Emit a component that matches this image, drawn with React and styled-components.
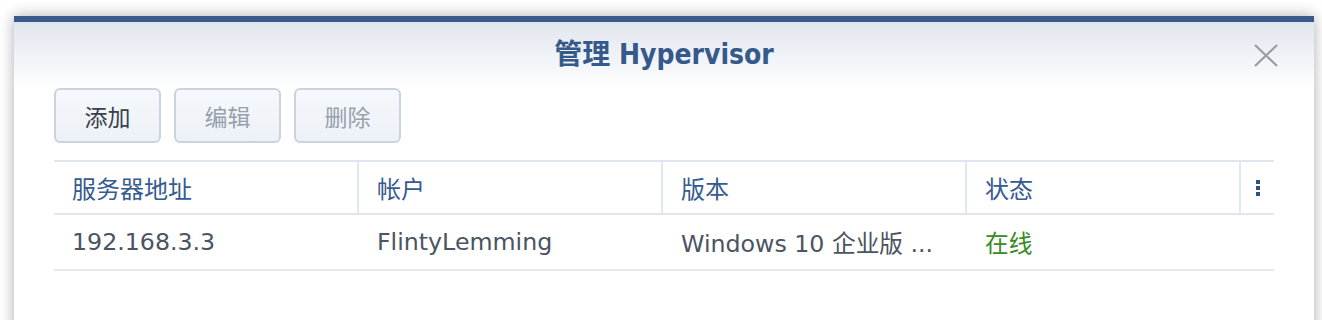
import React from 'react';
import styled, { createGlobalStyle } from 'styled-components';

const GlobalStyle = createGlobalStyle`
    html, body {
        margin: 0;
        padding: 0;
        background: #ffffff;
        overflow: hidden;
    }
`;

const Page = styled.div`
    padding: 16px 8px 0 14px;
    height: 320px;
    box-sizing: border-box;
`;

const Window = styled.div`
    height: 340px;
    border-top: 6px solid #395a8b;
    background: linear-gradient(#e1e6ee 0, #f6f8fb 50px, #ffffff 66px);
    box-shadow: 0 0 14px rgba(0, 0, 0, 0.32);
    padding: 0 40px;
`;

const TitleBar = styled.div`
    display: grid;
    grid-template-columns: 1fr auto 1fr;
    align-items: center;
    height: 66px;
`;

const Title = styled.h1`
    grid-column: 2;
    margin: 0;
    font-family: "DejaVu Sans Condensed", "DejaVu Sans", "Noto Sans CJK SC", sans-serif;
    font-weight: bold;
    font-size: 28px;
    line-height: 34px;
    color: #36598b;
`;

const CloseButton = styled.button`
    grid-column: 3;
    justify-self: end;
    margin-right: -6px;
    width: 28px;
    height: 26px;
    padding: 0;
    border: none;
    background: none;
    cursor: pointer;
    display: flex;
    align-items: center;
    justify-content: center;
`;

const Toolbar = styled.div`
    display: flex;
    gap: 13px;
    margin-bottom: 17px;
`;

const Button = styled.button`
    width: 107px;
    height: 55px;
    box-sizing: border-box;
    border: 2px solid #cbd4de;
    border-radius: 6px;
    background: linear-gradient(#f5f8fc, #edf1f7);
    font-family: "Noto Sans CJK SC", sans-serif;
    font-size: 23px;
    color: ${({ disabled }) => (disabled ? '#97a0ac' : '#3a424e')};
    cursor: ${({ disabled }) => (disabled ? 'default' : 'pointer')};
    padding: 0;
`;

const Table = styled.div`
    display: grid;
    grid-template-columns: 305px 304px 304px 274px 1fr;
    font-family: "DejaVu Sans", "Noto Sans CJK SC", sans-serif;
    font-size: 23.7px;
`;

const HeadCell = styled.div`
    display: flex;
    align-items: center;
    justify-content: ${({ center }) => (center ? 'center' : 'flex-start')};
    height: 51px;
    padding-left: ${({ center }) => (center ? '0' : '18px')};
    border-top: 2px solid #dfe6ef;
    border-bottom: 2px solid #dfe6ef;
    border-right: ${({ last }) => (last ? 'none' : '2px solid #e0e8f1')};
    color: #365b8f;
    font-family: "Noto Sans CJK SC", sans-serif;
    font-size: 24px;
`;

const Cell = styled.div`
    display: flex;
    align-items: center;
    height: 54px;
    padding-left: 18px;
    border-bottom: 2px solid #e6eaf0;
    color: ${({ status }) => (status ? '#3a8a25' : '#4a5462')};
    white-space: nowrap;
    overflow: hidden;
`;

const Kebab = styled.span`
    display: flex;
    flex-direction: column;
    gap: 2px;

    i {
        display: block;
        width: 4px;
        height: 4px;
        background: #2f5283;
    }
`;

const columns = ['服务器地址', '帐户', '版本', '状态'];

const rows = [
    { address: '192.168.3.3', account: 'FlintyLemming', version: 'Windows 10 企业版 ...', status: '在线' },
];

const App = () => {
    return (
        <Page>
            <GlobalStyle />
            <Window>
                <TitleBar>
                    <Title>管理 Hypervisor</Title>
                    <CloseButton aria-label="close">
                        <svg width="26" height="23" viewBox="0 0 26 23">
                            <path d="M2 1 L24 22 M24 1 L2 22" stroke="#9c9c9c" strokeWidth="2.2" fill="none" />
                        </svg>
                    </CloseButton>
                </TitleBar>
                <Toolbar>
                    <Button>添加</Button>
                    <Button disabled>编辑</Button>
                    <Button disabled>删除</Button>
                </Toolbar>
                <Table>
                    {columns.map((c) => (
                        <HeadCell key={c}>{c}</HeadCell>
                    ))}
                    <HeadCell last center>
                        <Kebab><i /><i /><i /></Kebab>
                    </HeadCell>
                    {rows.map((r) => (
                        <React.Fragment key={r.address}>
                            <Cell>{r.address}</Cell>
                            <Cell>{r.account}</Cell>
                            <Cell>{r.version}</Cell>
                            <Cell status>{r.status}</Cell>
                            <Cell />
                        </React.Fragment>
                    ))}
                </Table>
            </Window>
        </Page>
    );
};

export default App;
